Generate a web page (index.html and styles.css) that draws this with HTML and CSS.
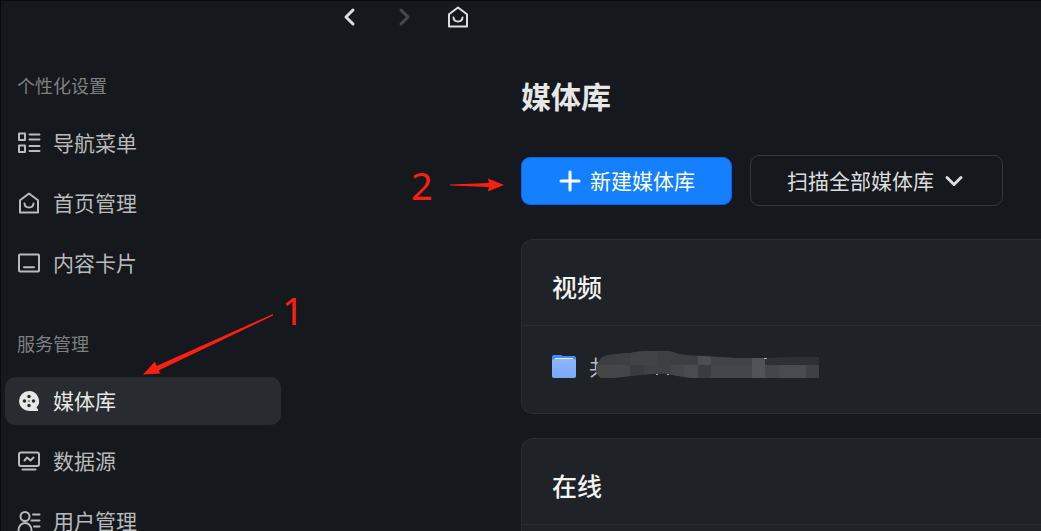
FILE: index.html
```html
<!DOCTYPE html>
<html lang="zh-CN">
<head>
<meta charset="utf-8">
<meta name="viewport" content="width=device-width, initial-scale=1">
<title>媒体库</title>
<link rel="stylesheet" href="styles.css">
</head>
<body>
<div class="app">
  <aside class="sidebar">
    <nav class="section" aria-labelledby="group-personal">
      <h2 class="section-title" id="group-personal">个性化设置</h2>
      <a class="item" href="#menu">
        <svg class="icon" viewBox="0 0 24 24"><path d="M2 2.500h6v6.500H2zM2 14.500h6V21H2zM12.500 3.500h10M12.500 8.500h10M12.500 15h10M12.500 20h10"/></svg>
        <span>导航菜单</span>
      </a>
      <a class="item" href="#home">
        <svg class="icon" viewBox="0 0 24 24"><path d="M3 9.300 12 2.500l9 6.800V21.500H3zM7.500 12.500c.5 5.300 8.500 5.300 9 0"/></svg>
        <span>首页管理</span>
      </a>
      <a class="item" href="#cards">
        <svg class="icon" viewBox="0 0 24 24"><rect x="2" y="3.500" width="20" height="17" rx="1"/><path d="M7 16.200h10"/></svg>
        <span>内容卡片</span>
      </a>
    </nav>
    <nav class="section" aria-labelledby="group-service">
      <h2 class="section-title" id="group-service">服务管理</h2>
      <a class="item active" href="#library" aria-current="page">
        <svg class="icon" viewBox="0 0 24 24"><path class="solid" fill-rule="evenodd" d="M12 2a10 10 0 0 1 7.500 16.600c.4.900 1 1.400 1.500 1.700V22h-9a10 10 0 0 1 0-20zm0 3.700a1.800 1.800 0 1 0 0 3.600 1.800 1.800 0 0 0 0-3.600zm0 9a1.800 1.800 0 1 0 0 3.600 1.800 1.800 0 0 0 0-3.600zm-4.500-4.500a1.800 1.800 0 1 0 0 3.600 1.800 1.800 0 0 0 0-3.600zm9 0a1.800 1.800 0 1 0 0 3.600 1.800 1.800 0 0 0 0-3.600zM12 11.200a.8.8 0 1 0 0 1.600.8.8 0 0 0 0-1.600z"/></svg>
        <span>媒体库</span>
      </a>
      <a class="item" href="#source">
        <svg class="icon" viewBox="0 0 24 24"><rect x="2" y="3.500" width="20" height="13.500" rx="2"/><path d="M7.500 11.500 10 8.500l3.500 3L16.500 8.500M5.500 20.500h13"/></svg>
        <span>数据源</span>
      </a>
      <a class="item" href="#users">
        <svg class="icon" viewBox="0 0 24 24"><circle cx="8" cy="7.500" r="4.500"/><path d="M1.500 21.500c0-10 13-10 13 0M16 5.500h6.500M14.500 11.500h8M17 17.500h5.500"/></svg>
        <span>用户管理</span>
      </a>
    </nav>
  </aside>

  <div class="page">
    <header class="topbar">
      <button class="nav-button" type="button" aria-label="后退"><svg class="icon strong" viewBox="0 0 24 24"><path d="m15 5-7 7 7 7"/></svg></button>
      <button class="nav-button" type="button" aria-label="前进" disabled><svg class="icon strong" viewBox="0 0 24 24"><path d="m9 5 7 7-7 7"/></svg></button>
      <button class="nav-button" type="button" aria-label="首页"><svg class="icon" viewBox="0 0 24 24"><path d="M3 9.300 12 2.500l9 6.800V21.500H3zM7.500 12.500c.5 5.300 8.500 5.300 9 0"/></svg></button>
    </header>
    <main class="main">
      <h1 class="title">媒体库</h1>
      <div class="actions">
        <button class="button primary" type="button">
          <svg class="icon strong" viewBox="0 0 24 24"><path d="M12 3v18M3 12h18"/></svg>
          <span>新建媒体库</span>
        </button>
        <button class="button outline" type="button" aria-haspopup="menu">
          <span>扫描全部媒体库</span>
          <svg class="icon strong" viewBox="0 0 24 24"><path d="m5 8.500 7 7 7-7"/></svg>
        </button>
      </div>
      <section class="card">
        <h2 class="card-title">视频</h2>
        <div class="folder-row">
          <svg class="folder" viewBox="0 0 24 24">
            <defs><linearGradient id="folder-fill" x1="0" y1="0" x2="0" y2="1"><stop offset="0" stop-color="#8db8ff"/><stop offset="1" stop-color="#7ba6ff"/></linearGradient></defs>
            <path fill="#438bfa" d="M0 3a2 2 0 0 1 2-2h7l2 1h11a2 2 0 0 1 2 2v9H0z"/>
            <rect y="5" width="24" height="19" rx="2" fill="url(#folder-fill)"/>
            <path stroke="#e8f0ff" d="M3 4.500h18"/>
          </svg>
          <div class="folder-name">
            <span>共</span>
            <svg class="mask" viewBox="0 0 223 28" aria-hidden="true">
              <defs><clipPath id="mask-shape"><path d="M4 8C8 3 20 3 34 2Q42 0 50 0H70C78 0 80 3 90 4 102 5 110 5 121 6L140 7H172L223 6V27H97C84 26 79 24 72 23 50 22 40 25 17 27H5Q-2 22 0 15z"/></clipPath></defs>
              <g clip-path="url(#mask-shape)">
                <path fill="#3c3e41" d="M0 0h223v28H0z"/>
                <path fill="#3d4043" d="M21 0h13v14H21zM61 0h14v14H61z"/>
                <path fill="#414447" d="M34 0h27v14H34zM115 0h41v14h-41z"/>
                <path fill="#4b4e52" d="M102 0h13v14h-13z"/>
                <path fill="#2e3033" d="M169 0h54v14h-54z"/>
                <path fill="#454649" d="M0 14h34v14H0zM75 14h27v14H75zM115 14h41v14h-41zM169 14h14v14h-14z"/>
                <path fill="#3b3c40" d="M34 14h14v14H34zM102 14h13v14h-13z"/>
                <path fill="#3d4144" d="M48 14h27v14H48zM210 14h13v14h-13z"/>
                <path fill="#525357" d="M156 0h13v28h-13z"/>
                <path fill="#494b4e" d="M88 14h14v14H88zM183 14h27v14h-27z"/>
              </g>
              <path stroke="#a9aaac" d="M60 23.500h2M71 23.500h2M168 7.500h3"/>
            </svg>
          </div>
        </div>
      </section>
      <section class="card">
        <h2 class="card-title">在线</h2>
        <div class="folder-row"></div>
      </section>
    </main>
  </div>

  <div class="note note-one">
    <svg class="arrow-one" viewBox="0 0 130 62" aria-hidden="true"><path d="M130 0v1.500L15.500 56.500l2 3L0 60.500 12 47.500l1.500 4.500z"/></svg>
    <span>1</span>
  </div>
  <div class="note note-two">
    <span>2</span>
    <svg class="arrow-two" viewBox="0 0 54 14" aria-hidden="true"><path d="M0 6.500 39 5 38 .5 54 7 38 13.500 39 9 0 7.500z"/></svg>
  </div>
</div>
</body>
</html>
```
FILE: styles.css
```css
* {
  box-sizing: border-box;
}

body {
  margin: 0;
  background: #15181c;
  color: #b9babb;
  font-family: "Noto Sans CJK SC", sans-serif;
  font-size: 21px;
  line-height: 32px;
}

h1,
h2 {
  margin: 0;
}

button {
  font: inherit;
  color: inherit;
  border: 0;
  background: none;
  padding: 0;
}

svg {
  display: block;
  flex: none;
  fill: none;
}

.app {
  position: relative;
  display: flex;
  height: 100vh;
  overflow: hidden;
  border-top: 1px solid #07090b;
  border-left: 1px solid #07090b;
}

.icon {
  width: 24px;
  height: 24px;
  stroke: currentColor;
  stroke-width: 2;
  stroke-linecap: round;
  stroke-linejoin: round;
}

.strong {
  stroke-width: 3;
}

.solid {
  fill: currentColor;
  stroke: none;
}

.sidebar {
  flex: none;
  width: 280px;
  padding: 72px 0 0 4px;
}

.section {
  display: flex;
  flex-direction: column;
  gap: 12px;
  margin-bottom: 44px;
}

.section-title {
  margin-bottom: 10px;
  padding-left: 12px;
  color: #7e8082;
  font-size: 18px;
  font-weight: 400;
  line-height: 24px;
}

.item {
  display: flex;
  align-items: center;
  gap: 12px;
  height: 48px;
  flex: none;
  padding: 0 12px;
  border-radius: 10px;
  color: inherit;
  text-decoration: none;
}

.item span {
  padding-bottom: 3px;
}

.active {
  background: #282b2f;
  color: #e6e7e7;
}

.page {
  flex: 1;
  min-width: 0;
}

.topbar {
  display: flex;
  gap: 30px;
  padding: 4px 0 0 57px;
  color: #dcdddd;
}

.nav-button:disabled {
  color: #46494c;
}

.main {
  padding: 46px 0 0 240px;
}

.title {
  color: #e6e7e7;
  font-size: 30px;
  font-weight: 700;
  line-height: 40px;
}

.actions {
  display: flex;
  align-items: center;
  gap: 18px;
  margin: 40px 0 33px;
}

.button {
  display: flex;
  align-items: center;
  justify-content: center;
  gap: 8px;
  border: 1px solid #36393c;
  border-radius: 9px;
}

.button span {
  padding-bottom: 2px;
}

.primary {
  height: 48px;
  padding: 0 36px;
  background: #1580ff;
  border-color: #0f60f2;
  color: #fff;
}

.outline {
  height: 51px;
  padding: 0 36px;
  color: #dcdddd;
}

.card {
  margin-bottom: 24px;
  border: 1px solid #2a2d31;
  border-right: 0;
  border-radius: 12px 0 0 12px;
  background: #1f2226;
}

.card-title {
  padding: 28px 30px 21px;
  border-bottom: 1px solid #2a2d31;
  color: #f2f3f3;
  font-size: 25px;
  font-weight: 500;
  line-height: 36px;
}

.folder-row {
  display: flex;
  align-items: center;
  gap: 13px;
  min-height: 87px;
  padding: 0 30px 8px;
}

.folder {
  width: 24px;
  height: 24px;
}

.folder-name {
  position: relative;
}

.mask {
  position: absolute;
  top: 1px;
  left: 7px;
  width: 223px;
  height: 28px;
  background: linear-gradient(#1f2226, #1f2226) 6px 0 / 20px 28px no-repeat;
}

.note {
  position: absolute;
  display: flex;
  color: #ff1e12;
  font-family: "Noto Sans", sans-serif;
  font-size: 38px;
  line-height: 40px;
}

.note svg {
  fill: currentColor;
}

.note-one {
  top: 289px;
  left: 142px;
  gap: 9px;
}

.note-two {
  top: 164px;
  left: 410px;
  align-items: center;
  gap: 17px;
}

.arrow-one {
  width: 130px;
  height: 62px;
  margin-top: 24px;
}

.arrow-two {
  width: 54px;
  height: 14px;
}
```
